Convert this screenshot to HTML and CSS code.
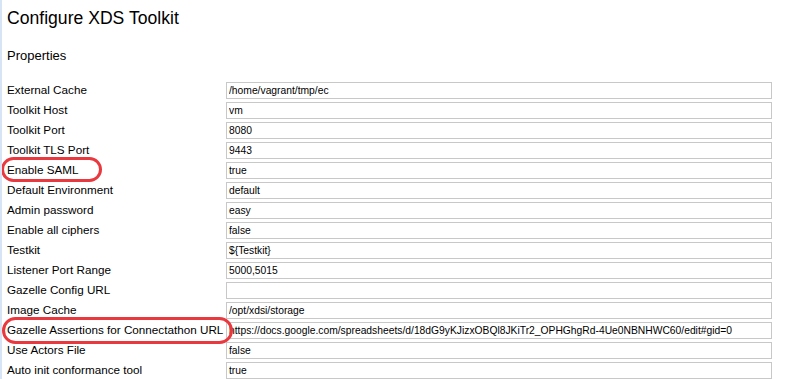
FILE: index.html
```html
<!DOCTYPE html>
<html>
<head>
<meta charset="utf-8">
<link rel="stylesheet" href="styles.css">
</head>
<body>
<div class="page">
  <h1 class="title">Configure XDS Toolkit</h1>
  <h2 class="subtitle">Properties</h2>
  <div class="props">
    <div class="row"><span class="label">External Cache</span><input class="field" value="/home/vagrant/tmp/ec"></div>
    <div class="row"><span class="label">Toolkit Host</span><input class="field" value="vm"></div>
    <div class="row"><span class="label">Toolkit Port</span><input class="field" value="8080"></div>
    <div class="row"><span class="label">Toolkit TLS Port</span><input class="field" value="9443"></div>
    <div class="row"><span class="label">Enable SAML<span class="mark mark-saml"></span></span><input class="field" value="true"></div>
    <div class="row"><span class="label">Default Environment</span><input class="field" value="default"></div>
    <div class="row"><span class="label">Admin password</span><input class="field" value="easy"></div>
    <div class="row"><span class="label">Enable all ciphers</span><input class="field" value="false"></div>
    <div class="row"><span class="label">Testkit</span><input class="field" value="${Testkit}"></div>
    <div class="row"><span class="label">Listener Port Range</span><input class="field" value="5000,5015"></div>
    <div class="row"><span class="label">Gazelle Config URL</span><input class="field" value=""></div>
    <div class="row"><span class="label">Image Cache</span><input class="field" value="/opt/xdsi/storage"></div>
    <div class="row"><span class="label">Gazelle Assertions for Connectathon URL<span class="mark mark-gazelle"></span></span><input class="field" value="https://docs.google.com/spreadsheets/d/18dG9yKJizxOBQl8JKiTr2_OPHGhgRd-4Ue0NBNHWC60/edit#gid=0"></div>
    <div class="row"><span class="label">Use Actors File</span><input class="field" value="false"></div>
    <div class="row"><span class="label">Auto init conformance tool</span><input class="field" value="true"></div>
  </div>
</div>
</body>
</html>
```
FILE: styles.css
```css
html, body {
  margin: 0;
  padding: 0;
  background: #ffffff;
}
body {
  font-family: "Liberation Sans", Arial, sans-serif;
  color: #000;
  border-left: 2px solid #d6e4f5;
  min-height: 379px;
  box-sizing: border-box;
}
.page {
  padding: 7px 0 0 5px;
}
.title {
  font-size: 17.6px;
  font-weight: normal;
  margin: 0;
  line-height: 22px;
}
.subtitle {
  font-size: 13px;
  font-weight: normal;
  margin: 19px 0 0 0;
  line-height: 16px;
}
.props {
  margin-top: 16px;
  display: flex;
  flex-direction: column;
}
.row {
  display: flex;
  align-items: center;
  height: 20px;
}
.label {
  position: relative;
  width: 219px;
  font-size: 11.7px;
  line-height: 16px;
  white-space: nowrap;
}
.field {
  width: 546px;
  height: 17px;
  box-sizing: border-box;
  border: 1px solid #c8c8c8;
  padding: 0 2px;
  margin: 0;
  font-family: "Liberation Sans", Arial, sans-serif;
  font-size: 10.3px;
  color: #000;
  background: #fff;
  outline: none;
}
.mark {
  position: absolute;
  z-index: 1;
  border: 3px solid #e9393f;
  border-radius: 14px;
  box-sizing: border-box;
}
.mark-saml {
  left: -6px;
  top: -5px;
  width: 101px;
  height: 25px;
}
.mark-gazelle {
  left: -5px;
  top: -5px;
  width: 231px;
  height: 27px;
}
```
